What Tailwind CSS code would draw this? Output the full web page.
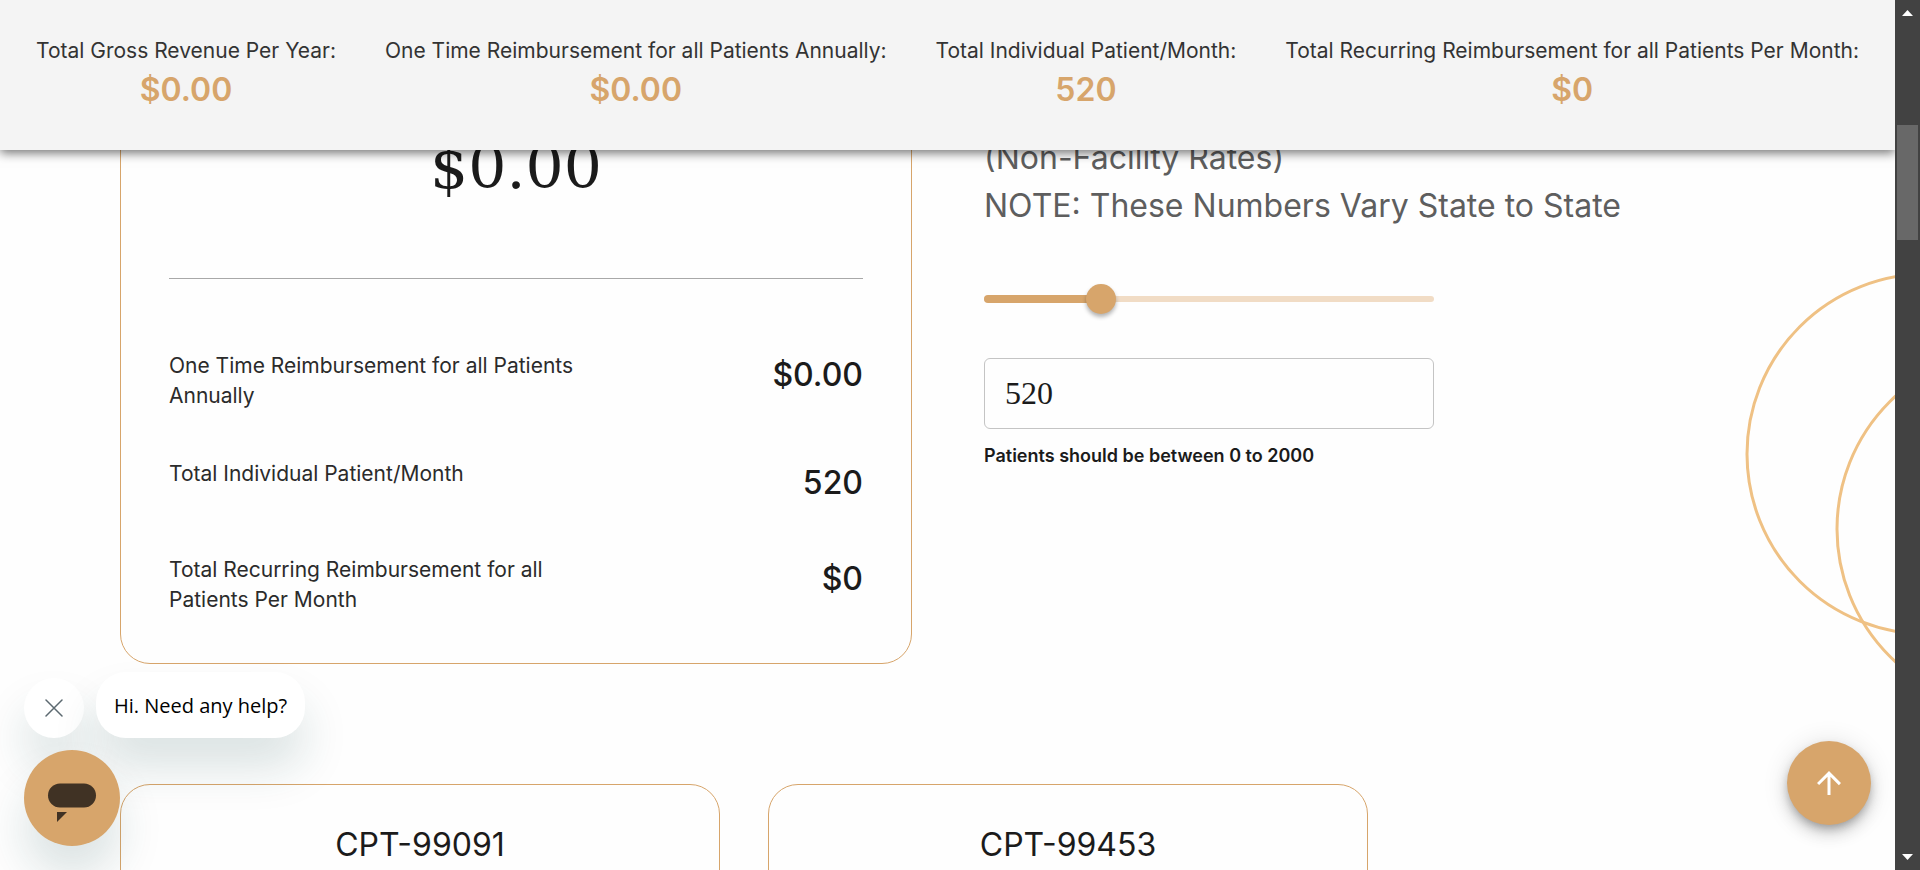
<!DOCTYPE html>
<html lang="en">
<head>
<meta charset="utf-8">
<meta name="viewport" content="width=device-width, initial-scale=1">
<title>Reimbursement Calculator</title>
<script src="https://cdn.jsdelivr.net/npm/@tailwindcss/browser@4"></script>
</head>
<body class="flex h-screen overflow-hidden bg-[#fefefe] font-['Inter',sans-serif] text-[#1b1b1b]">
<div class="relative flex min-w-0 flex-1 flex-col overflow-hidden">
  <header class="relative z-10 flex h-[150px] shrink-0 justify-between bg-[#f4f4f4] px-9 pt-9 text-center shadow-[0_3px_10px_rgba(0,0,0,0.55)]">
    <div>
      <p class="text-[21px] leading-[30px] text-[#333]">Total Gross Revenue Per Year:</p>
      <p class="text-[32px] leading-12 font-semibold text-[#d7a56b]">$0.00</p>
    </div>
    <div>
      <p class="text-[21px] leading-[30px] text-[#333]">One Time Reimbursement for all Patients Annually:</p>
      <p class="text-[32px] leading-12 font-semibold text-[#d7a56b]">$0.00</p>
    </div>
    <div>
      <p class="text-[21px] leading-[30px] text-[#333]">Total Individual Patient/Month:</p>
      <p class="text-[32px] leading-12 font-semibold text-[#d7a56b]">520</p>
    </div>
    <div>
      <p class="text-[21px] leading-[30px] text-[#333]">Total Recurring Reimbursement for all Patients Per Month:</p>
      <p class="text-[32px] leading-12 font-semibold text-[#d7a56b]">$0</p>
    </div>
  </header>

  <main class="relative min-h-0 flex-1 overflow-hidden">
    <svg class="absolute top-0 right-0 h-[720px] w-[200px]" viewBox="1695 150 200 720" fill="none" stroke="#efc184" stroke-width="3" aria-hidden="true">
      <circle cx="1927" cy="454" r="180"/>
      <circle cx="2017" cy="529" r="180"/>
    </svg>

    <div class="relative flex gap-18 px-30">
      <section class="-mt-10 w-[792px] shrink-0 rounded-[30px] border border-[#d7a56b] px-12 pb-12">
        <p class="pt-6 text-center font-['DejaVu_Serif',serif] text-[60px] leading-16">$0.00</p>
        <hr class="mt-[79px] mb-[72px] border-[#a8a8a8]">
        <dl class="flex flex-col text-[21px] leading-[30px] text-[#2b2b2b]">
          <div class="flex min-h-[108px] justify-between">
            <dt class="w-[416px]">One Time Reimbursement for all Patients Annually</dt>
            <dd class="text-[32px] leading-12 font-medium text-[#1b1b1b]">$0.00</dd>
          </div>
          <div class="flex min-h-24 justify-between">
            <dt class="w-[416px]">Total Individual Patient/Month</dt>
            <dd class="text-[32px] leading-12 font-medium text-[#1b1b1b]">520</dd>
          </div>
          <div class="flex justify-between">
            <dt class="w-[416px]">Total Recurring Reimbursement for all Patients Per Month</dt>
            <dd class="text-[32px] leading-12 font-medium text-[#1b1b1b]">$0</dd>
          </div>
        </dl>
      </section>

      <section class="min-w-0 flex-1">
        <p class="-mt-4 text-[32px] leading-12 text-[#5e5e5e]">(Non-Facility Rates)<br>NOTE: These Numbers Vary State to State</p>
        <div class="relative mt-[54px] flex h-[30px] w-[450px] items-center">
          <div class="h-[6px] w-full rounded-full bg-[#f1dcc5]"></div>
          <div class="absolute h-2 rounded-full bg-[#d7a56b]" style="width:26%"></div>
          <input type="range" min="0" max="2000" value="520" aria-label="Number of patients" class="absolute -left-[15px] h-[30px] w-[calc(100%+30px)] appearance-none bg-transparent [&::-webkit-slider-thumb]:size-[30px] [&::-webkit-slider-thumb]:appearance-none [&::-webkit-slider-thumb]:rounded-full [&::-webkit-slider-thumb]:bg-[#d7a56b] [&::-webkit-slider-thumb]:shadow-[0_3px_4px_rgba(0,0,0,0.3)]">
        </div>
        <input id="patients" type="text" value="520" class="mt-11 block h-[71px] w-[450px] rounded-md border border-[#c4c4c4] px-5 font-['Liberation_Serif',serif] text-[32px]">
        <label for="patients" class="mt-[13px] block text-lg leading-7 font-semibold">Patients should be between 0 to 2000</label>
      </section>
    </div>

    <div class="relative mt-30 flex gap-12 px-30">
      <section class="h-60 w-[600px] shrink-0 rounded-[30px] border border-[#d7a56b] pt-9 text-center">
        <h2 class="text-[32px] leading-12 font-normal">CPT-99091</h2>
      </section>
      <section class="h-60 w-[600px] shrink-0 rounded-[30px] border border-[#d7a56b] pt-9 text-center">
        <h2 class="text-[32px] leading-12 font-normal">CPT-99453</h2>
      </section>
    </div>
  </main>

  <div class="absolute bottom-6 left-6 z-20 flex flex-col gap-3">
    <div class="flex items-end gap-3">
      <button type="button" aria-label="Close" class="flex size-15 items-center justify-center rounded-full bg-white shadow-[0_30px_45px_rgba(23,73,77,0.15)]">
        <svg class="size-[18px]" viewBox="0 0 18 18" fill="none" stroke="#5c6970" stroke-width="1.5" stroke-linecap="round" aria-hidden="true"><path d="M1 1l16 16M17 1L1 17"/></svg>
      </button>
      <button type="button" class="h-[66px] rounded-[30px] bg-white px-[18px] pt-0.5 font-['Open_Sans',sans-serif] text-xl text-black shadow-[0_30px_45px_rgba(23,73,77,0.15)]">Hi. Need any help?</button>
    </div>
    <button type="button" aria-label="Open chat" class="size-24 rounded-full bg-[#d7a56b] shadow-[0_30px_45px_rgba(23,73,77,0.15)]">
      <svg class="size-24" viewBox="0 0 96 96" fill="#403224" aria-hidden="true"><rect x="24" y="33.500" width="48" height="24" rx="12"/><path d="M33 62h10l-10 10z"/></svg>
    </button>
  </div>

  <button type="button" aria-label="Back to top" class="absolute right-6 bottom-[45px] z-20 flex size-21 items-center justify-center rounded-full bg-[#d7a56b] shadow-[0_5px_8px_-2px_rgba(0,0,0,0.25),0_9px_15px_rgba(0,0,0,0.14),0_2px_27px_rgba(0,0,0,0.12)]">
    <svg class="size-9" viewBox="0 0 24 24" fill="#fff" aria-hidden="true"><path d="M4 12l1.410 1.410L11 7.830V20h2V7.830l5.580 5.590L20 12l-8-8-8 8z"/></svg>
  </button>
</div>

<aside aria-hidden="true" class="flex w-[25px] shrink-0 flex-col items-center justify-between bg-[#424242] pt-[10px] pb-[10px]">
  <svg class="h-[6px] w-[11px]" viewBox="0 0 11 6" fill="#fff"><path d="M0 6h11L5.500 0z"/></svg>
  <div class="mt-[109px] mb-auto h-[115px] w-[21px] bg-[#686868]"></div>
  <svg class="h-[6px] w-[11px]" viewBox="0 0 11 6" fill="#fff"><path d="M0 0h11L5.500 6z"/></svg>
</aside>
</body>
</html>
